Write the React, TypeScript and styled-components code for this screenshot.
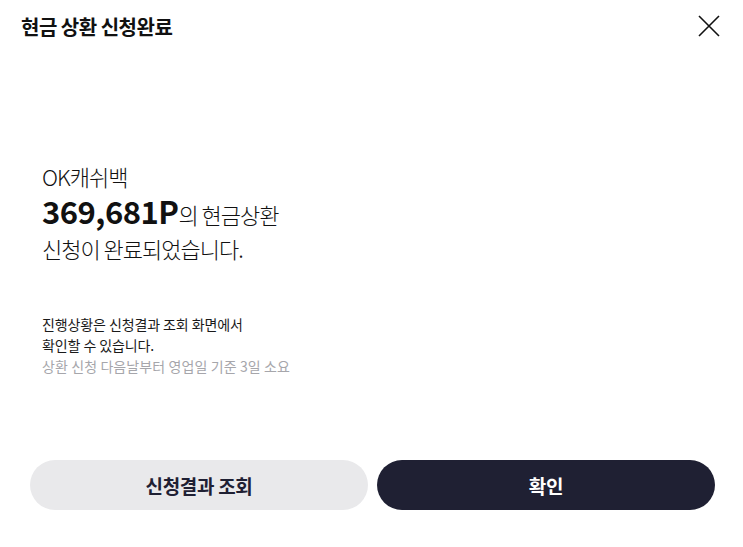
import styled, {createGlobalStyle} from 'styled-components'

const Global = createGlobalStyle`
  html, body {
    margin: 0;
    padding: 0;
    background: #fff;
  }
  body {
    font-family: 'Noto Sans CJK KR', 'Noto Sans', sans-serif;
    color: #111;
    -webkit-font-smoothing: antialiased;
  }
`

const Sheet = styled.div`
  height: 547px;
  display: flex;
  flex-direction: column;
  background: #fff;
`

const Header = styled.header`
  height: 52px;
  display: flex;
  align-items: center;
  justify-content: space-between;
  padding: 0 22px 0 21px;
`

const Title = styled.h1`
  margin: 0;
  font-size: 20px;
  font-weight: 700;
  letter-spacing: -0.5px;
  color: #111;
`

const Close = styled.button`
  width: 24px;
  height: 24px;
  padding: 0;
  border: 0;
  background: none;
  display: flex;
  align-items: center;
  justify-content: center;
  cursor: pointer;
`

const Body = styled.main`
  flex: 1;
  display: flex;
  flex-direction: column;
  padding: 108px 42px 0;
`

const Headline = styled.div`
  font-size: 22px;
  font-weight: 300;
  line-height: 33px;
  letter-spacing: -1px;
  color: #111;
`

const Line = styled.div<{$tall?: boolean}>`
  line-height: ${p => (p.$tall ? '36px' : '33px')};
`

const Amount = styled.strong`
  font-size: 31px;
  font-weight: 700;
  letter-spacing: -0.5px;
`

const Notice = styled.div`
  margin-top: 49px;
  font-size: 14px;
  line-height: 21px;
  letter-spacing: -0.1px;
`

const NoticeLine = styled.div<{$muted?: boolean}>`
  color: ${p => (p.$muted ? '#a6a6ab' : '#1a1a1a')};
  letter-spacing: ${p => (p.$muted ? '0.1px' : '-0.1px')};
  font-weight: 400;
`

const Footer = styled.footer`
  display: flex;
  gap: 9px;
  padding: 0 28px 37px 30px;
`

const Button = styled.button<{$primary?: boolean}>`
  flex: 1;
  height: 50px;
  border: 0;
  border-radius: 25px;
  font-family: inherit;
  font-size: 19px;
  font-weight: 700;
  letter-spacing: -0.3px;
  background: ${p => (p.$primary ? '#1f2033' : '#e9e9eb')};
  color: ${p => (p.$primary ? '#fff' : '#1f2033')};
  cursor: pointer;
`

export default function App() {
  return (
    <Sheet>
      <Global />
      <Header>
        <Title>현금 상환 신청완료</Title>
        <Close aria-label="닫기">
          <svg width="22" height="22" viewBox="0 0 22 22" fill="none">
            <path d="M1 1L21 21M21 1L1 21" stroke="#111" strokeWidth="1.6" />
          </svg>
        </Close>
      </Header>
      <Body>
        <Headline>
          <Line>OK캐쉬백</Line>
          <Line $tall>
            <Amount>369,681P</Amount>의 현금상환
          </Line>
          <Line>신청이 완료되었습니다.</Line>
        </Headline>
        <Notice>
          <NoticeLine>진행상황은 신청결과 조회 화면에서</NoticeLine>
          <NoticeLine>확인할 수 있습니다.</NoticeLine>
          <NoticeLine $muted>상환 신청 다음날부터 영업일 기준 3일 소요</NoticeLine>
        </Notice>
      </Body>
      <Footer>
        <Button>신청결과 조회</Button>
        <Button $primary>확인</Button>
      </Footer>
    </Sheet>
  )
}
